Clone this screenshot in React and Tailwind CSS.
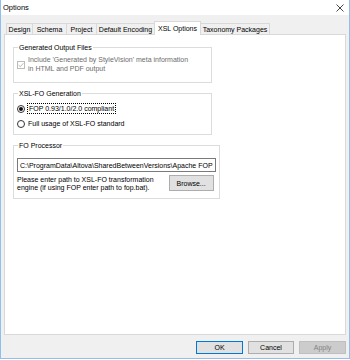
import { memo } from 'react';

const font = { fontFamily: '"Liberation Sans", Arial, sans-serif' };

const tabs = [
  { label: 'Design', w: 'w-[27px]' },
  { label: 'Schema', w: 'w-[34px]' },
  { label: 'Project', w: 'w-[30px]' },
  { label: 'Default Encoding', w: 'w-[58px]' },
  { label: 'XSL Options', w: 'w-[47px]', active: true },
  { label: 'Taxonomy Packages', w: 'w-[69px]' },
];

const Tab = memo(({ tab, first }) => {
  if (tab.active) {
    return (
      <div
        className={`${tab.w} h-[14px] -mb-px -ml-px relative z-10 bg-white border-t border-l border-r border-[#d9d9d9] flex items-center justify-center text-[7px] leading-[9px] text-black whitespace-nowrap`}
      >
        {tab.label}
      </div>
    );
  }
  return (
    <div
      className={`${tab.w} h-[11px] bg-[#f0f0f0] border-t border-r border-[#d9d9d9] ${first ? 'border-l' : ''} flex items-center justify-center text-[7px] leading-[9px] text-black whitespace-nowrap`}
    >
      {tab.label}
    </div>
  );
});

Tab.displayName = 'Tab';

function Group({ title, children, className }) {
  return (
    <fieldset className="w-[199px] border border-[#dcdcdc]">
      <legend className="ml-[4px] px-[1px] text-[7px] leading-[9px] text-black">{title}</legend>
      <div className={className}>{children}</div>
    </fieldset>
  );
}

function Radio({ checked }) {
  return (
    <div className="w-[8px] h-[8px] rounded-full border border-[#333333] bg-white flex items-center justify-center shrink-0">
      {checked && <div className="w-[4px] h-[4px] rounded-full bg-[#111111]" />}
    </div>
  );
}

function WinButton({ children, variant = 'normal', w }) {
  const styles = {
    normal: 'bg-[#e1e1e1] border-[#adadad] text-black',
    default: 'bg-[#e1e1e1] border-[#0078d7] text-black',
    disabled: 'bg-[#cccccc] border-[#bfbfbf] text-[#838383]',
  };
  return (
    <div className={`${w} h-[13px] border ${styles[variant]} flex items-center justify-center text-[7px] leading-[9px]`}>
      {children}
    </div>
  );
}

export default function App() {
  return (
    <div className="w-[350px] h-[360px] bg-white" style={font}>
      <div className="w-[350px] h-[359px] flex flex-col border-x border-b border-[#8fbfee]">
        {/* title bar */}
        <div className="h-[15px] bg-white flex items-center justify-between pl-[2px] pr-[5px]">
          <span className="text-[7.5px] leading-[10px] text-black">Options</span>
          <svg width="8" height="8" viewBox="0 0 8 8" className="text-[#333333]">
            <path d="M0.5 0.5 L7.5 7.5 M7.5 0.5 L0.5 7.5" stroke="currentColor" strokeWidth="0.9" fill="none" />
          </svg>
        </div>

        <div className="flex-1 bg-[#f0f0f0] flex flex-col px-[3px] pt-[6px] pb-[4px]">
          {/* tabs */}
          <div className="flex items-end pl-[2px] h-[13px]">
            {tabs.map((t, i) => (
              <Tab key={t.label} tab={t} first={i === 0} />
            ))}
          </div>

          {/* tab panel */}
          <div className="flex-1 bg-white border border-[#d9d9d9] pl-[8px] pt-[8px] flex flex-col gap-[6px]">
            <Group title="Generated Output Files" className="pl-[3px] pt-[3px] pb-[9px]">
              <div className="flex items-start gap-[3px]">
                <div className="mt-[6px] w-[8px] h-[8px] border border-[#bcbcbc] bg-white flex items-center justify-center shrink-0">
                  <svg width="6" height="6" viewBox="0 0 6 6">
                    <path d="M0.6 3.1 L2.3 4.7 L5.4 1.2" stroke="#a8a8a8" strokeWidth="0.8" fill="none" />
                  </svg>
                </div>
                <div className="text-[7px] leading-[9px] text-[#6d6d6d]">
                  Include 'Generated by StyleVision' meta information
                  <br />
                  in HTML and PDF output
                </div>
              </div>
            </Group>

            <Group title="XSL-FO Generation" className="pl-[3px] pt-[5px] pb-[5px] flex flex-col gap-[4px]">
              <div className="h-[11px] flex items-center gap-[2px]">
                <Radio checked />
                <span className="border border-dotted border-black px-[1px] text-[7px] leading-[9px] text-black">
                  FOP 0.93/1.0/2.0 compliant
                </span>
              </div>
              <div className="h-[11px] flex items-center gap-[3px]">
                <Radio />
                <span className="text-[7px] leading-[9px] text-black">Full usage of XSL-FO standard</span>
              </div>
            </Group>

            <Group title="FO Processor" className="px-[3px] pt-[8px] pb-[6px]">
              <div className="h-[14px] border border-[#7a7a7a] bg-white px-[2px] flex items-center overflow-hidden whitespace-nowrap text-[7px] leading-[9px] text-black">
                C:\ProgramData\Altova\SharedBetweenVersions\Apache FOP
              </div>
              <div className="mt-[3px] flex items-start justify-between">
                <div className="mt-[1px] text-[7px] leading-[8px] text-black">
                  Please enter path to XSL-FO transformation
                  <br />
                  engine (if using FOP enter path to fop.bat).
                </div>
                <div className="mr-[2px] w-[45px] h-[16px] border border-[#adadad] bg-[#e1e1e1] flex items-center justify-center text-[7px] leading-[9px] text-black">
                  Browse...
                </div>
              </div>
            </Group>
          </div>

          {/* dialog buttons */}
          <div className="mt-[6px] flex justify-end gap-[5px]">
            <WinButton variant="default" w="w-[47px]">OK</WinButton>
            <WinButton w="w-[46px]">Cancel</WinButton>
            <WinButton variant="disabled" w="w-[47px]">Apply</WinButton>
          </div>
        </div>
      </div>
    </div>
  );
}
